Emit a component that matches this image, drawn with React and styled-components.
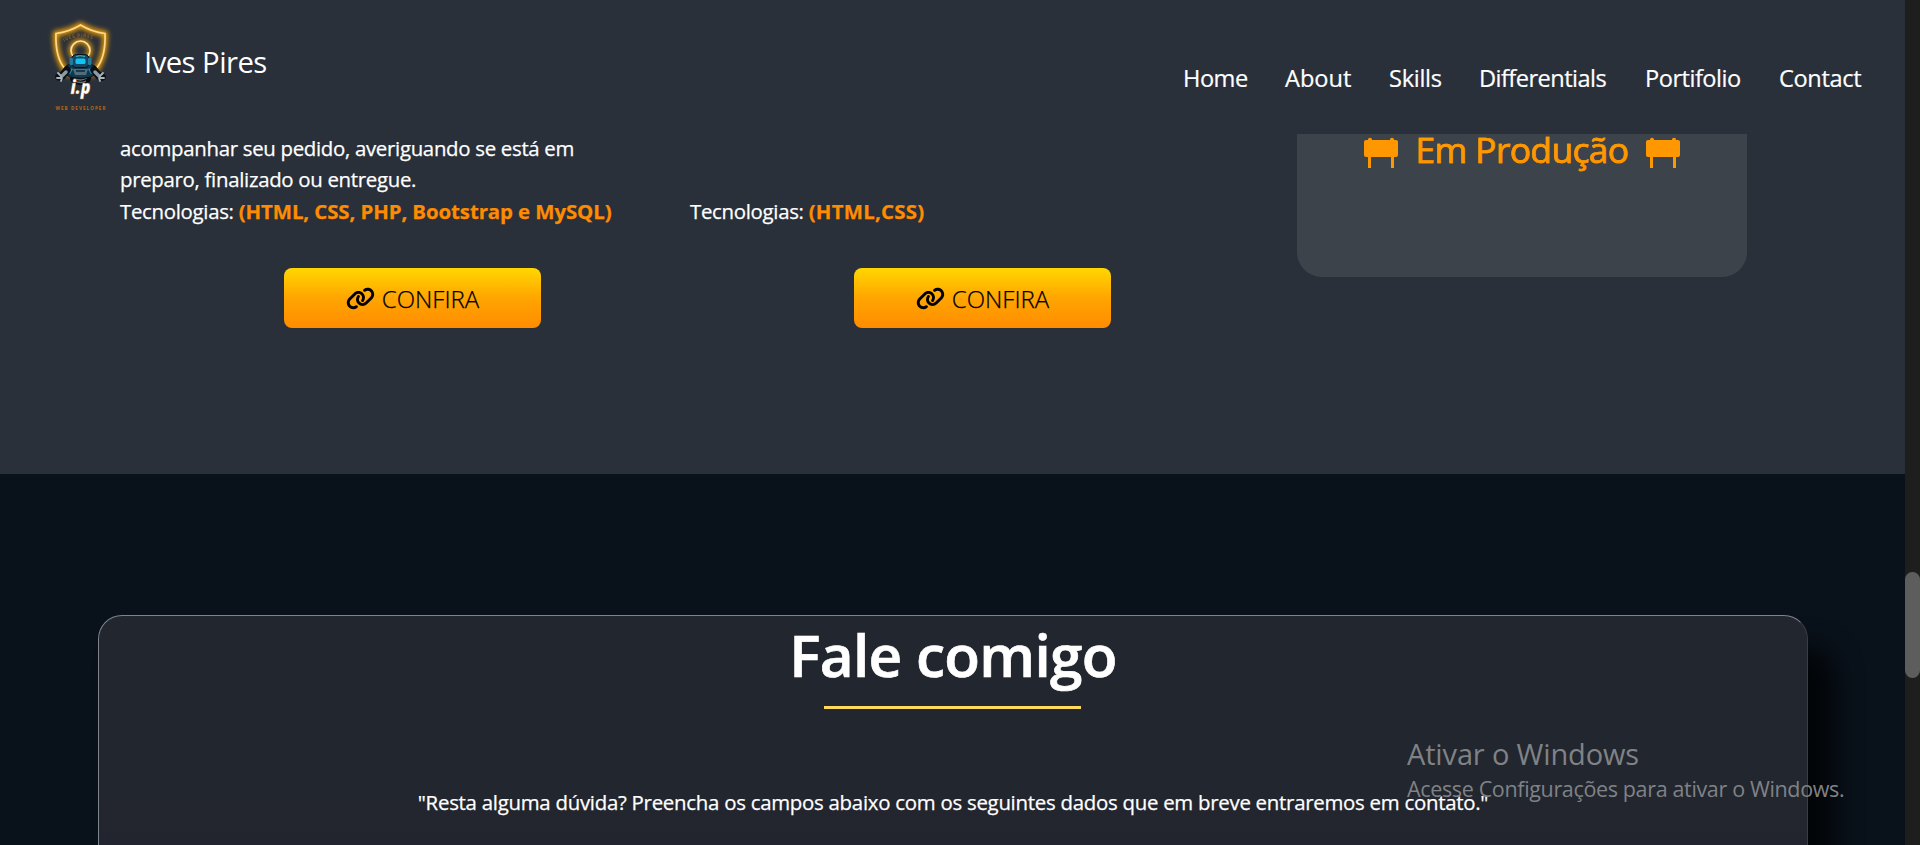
import React from "react";
import styled, { createGlobalStyle } from "styled-components";
import { FaLink } from "react-icons/fa6";

const Global = createGlobalStyle`
  *, *::before, *::after { box-sizing: border-box; }
  body { margin: 0; overflow: hidden; background: #09111a; font-family: "Open Sans", "Noto Sans", sans-serif; color: #fff; }
  p, h1, h2, h3 { margin: 0; font-weight: 400; }
`;
const Screen = styled.div`
  position: relative; display: flex; height: 845px; overflow: hidden;
`;
const Page = styled.main`flex: 1; min-width: 0; display: flex; flex-direction: column;`;
const Header = styled.header`
  height: 134px; flex: none; background: #29303a;
  display: flex; justify-content: space-between; padding: 0 43px 0 40px;
`;
const Brand = styled.div`display: flex; align-items: flex-start;`;
const Name = styled.h1`
  margin: 41px 0 0 24px; font-size: 29.3px; line-height: 42px; letter-spacing: -0.55px; white-space: nowrap;
`;
const Nav = styled.nav`display: flex; gap: 38px; margin-top: 60px; height: 36px;`;
const NavLink = styled.a`
  width: ${(p) => p.$w}px; font-size: 23.6px; line-height: 36px; white-space: nowrap; letter-spacing: ${(p) => p.$ls}px;
  -webkit-text-stroke: 0.2px currentColor;
`;
const Portfolio = styled.section`
  height: 340px; flex: none; background: #29303a; display: flex; align-items: flex-start; padding-left: 120px;
`;
const Project = styled.article`
  width: 570px; height: 194px; display: flex; flex-direction: column; justify-content: flex-end;
`;
const Text = styled.p`
  font-size: 20.4px; line-height: 31.3px; white-space: nowrap; letter-spacing: ${(p) => p.$ls ?? -0.3}px;
  -webkit-text-stroke: 0.25px currentColor;
`;
const Tech = styled.strong`font-weight: 700; color: #ff8c00; letter-spacing: ${(p) => p.$ls}px;`;
const Button = styled.button`
  width: 257px; height: 60px; margin: 41px 0 0 164px; flex: none; border: 0; border-radius: 8px; padding: 1px 0 0;
  background: linear-gradient(#ffd700, #ffa500 50%, #ff8c00); color: #000;
  display: flex; align-items: center; justify-content: center; gap: 7px;
  font: 300 24px/59px "Open Sans", sans-serif; letter-spacing: 0;
  -webkit-text-stroke: 0.25px currentColor;
`;
const Soon = styled.article`
  width: 450px; height: 143px; margin-left: 37px; border-radius: 0 0 25px 25px; background: #3c434a;
  display: flex; justify-content: center; gap: 18px; color: #ff9800;
`;
const SoonTitle = styled.h3`
  font-size: 35.5px; line-height: 50px; margin-top: -10px; height: 52px; letter-spacing: -0.7px; white-space: nowrap;
  background: linear-gradient(#ffa500, #ff8c00); background-clip: text; color: transparent;
  -webkit-text-stroke: 0.6px #ff9900;
`;
const Contact = styled.section`
  flex: 1; min-height: 0; padding: 141px 97px 0 98px; overflow: hidden;
  background: #09111a;
`;
const FormCard = styled.div`
  height: 700px; border-radius: 24px; border: 1px solid; border-color: #80828c #3a3d45 #3a3d45 #80828c;
  background: linear-gradient(#22262e 180px, #22252f 230px);
  box-shadow: 25px 34px 28px rgba(0, 0, 0, 0.75);
  display: flex; flex-direction: column; align-items: center;
`;
const Heading = styled.h2`
  font-size: 58.5px; font-weight: 600; line-height: 80px; height: 80px; margin-top: -2px;
  letter-spacing: -0.7px; white-space: nowrap; -webkit-text-stroke: 0.7px currentColor;
`;
const Rule = styled.div`width: 257px; height: 3px; background: #ffd95a; margin: 12px 1px 78px 0;`;
const Track = styled.aside`width: 15px; background: #1e1e1e; padding-top: 572px;`;
const Thumb = styled.div`height: 106px; border-radius: 7.5px; background: #5d5d5d;`;
const Watermark = styled.div`
  position: absolute; left: 1407px; top: 733px; color: #808286; white-space: nowrap;
`;
const MarkTitle = styled.div`font-size: 29px; line-height: 42px; letter-spacing: -0.15px;`;
const MarkText = styled.div`font-size: 21.5px; line-height: 28px; letter-spacing: -0.35px;`;

const Logo = () => (
  <svg width="80" height="134" viewBox="40 0 80 134" fontFamily="Open Sans, sans-serif">
    <defs>
      <filter id="glow" x="-50%" y="-50%" width="200%" height="200%"><feGaussianBlur stdDeviation="2.8" /></filter>
      <path id="arch" d="M64 42 Q80.500 32 98 42" />
    </defs>
    <g fill="none" stroke="#ffa800">
      <path d="M70 76 Q55 60 55.800 33.500 Q69 32 80.500 25 Q92 32 105 33.500 Q106 60 91 76" strokeWidth="5" filter="url(#glow)" />
      <path d="M65 69 Q55 57 56 33.500 Q69 32 80.500 25 Q92 32 105 33.500 Q106 57 96 69" stroke="#ffd98c" strokeWidth="1.700" />
      <circle cx="80.500" cy="50.500" r="9.500" strokeWidth="4" filter="url(#glow)" />
      <circle cx="80.500" cy="50.500" r="9.500" stroke="#ffe0a0" strokeWidth="1.700" />
    </g>
    <text fontSize="5" fontWeight="600" fill="#9a621c" letterSpacing="0.5"><textPath href="#arch">IVES PIRES</textPath></text>
    <ellipse cx="80.500" cy="78.500" rx="10.500" ry="6.500" fill="#0b0e12" />
    <path d="M74 78q6 4 13 0M75 81q6 3 11 0" fill="none" stroke="#6c7278" strokeWidth="1.300" />
    <path d="M66 66q6-4 14.500-3q8-1 14.500 3l4 6-8 5q-10 3-21 0l-8-5z" fill="#12384d" stroke="#090d12" strokeWidth="1" />
    <path d="M67 67l6 2-3 5-5-2zM94 67l-6 2 3 5 5-2z" fill="#238dc8" />
    <path d="M73 69h15l-2 6H75z" fill="#526c7a" />
    <path d="M76 71h9" stroke="#0c2736" strokeWidth="1.500" />
    <rect x="71.500" y="54.500" width="18" height="13" rx="5" fill="#164660" stroke="#081017" />
    <rect x="69.500" y="58" width="3.500" height="7" rx="1" fill="#267a9e" />
    <rect x="88" y="58" width="3.500" height="7" rx="1" fill="#267a9e" />
    <rect x="75.500" y="58.500" width="10" height="5.500" rx="1.500" fill="#10c5f4" />
    <path d="M76 56.500q4-1.500 9 0" fill="none" stroke="#43b8dc" strokeWidth="1.200" />
    <g fill="none" strokeLinecap="round" strokeLinejoin="round">
      <path d="M67 70l-5 6-3 1M94 70l5 6 3 1" stroke="#0b1015" strokeWidth="7.500" />
      <path d="M66 72l-4 4M95 72l4 4" stroke="#8c9ba3" strokeWidth="3.500" />
      <path d="M61 76l-3-3M61 78h-4M62 78l-1 3M100 76l3-3M100 78h4M99 78l1 3" stroke="#aab5ba" strokeWidth="1.800" />
    </g>
    <text x="70.500" y="94" fontSize="20" fontWeight="800" fontStyle="italic" fill="#fff" stroke="#d77718" strokeWidth="0.300" textLength="20" lengthAdjust="spacingAndGlyphs">i.p</text>
    <text x="55.500" y="109.500" fontSize="4.600" fontWeight="700" fill="#b36a16" textLength="50">WEB DEVELOPER</text>
  </svg>
);
const Board = () => (
  <svg width="34" height="43" viewBox="0 0 34 43" fill="currentColor">
    <path d="M2 6h2V5.500a2 1.700 0 0 1 4 0V6h18V5.500a2 1.700 0 0 1 4 0V6h2q2 0 2 2v13q0 2-2 2h-2v11h-3V23H7v11H4V23H2q-2 0-2-2V8q0-2 2-2z" />
  </svg>
);

const links = [
  ["Home", 64, -0.5], ["About", 66, 0], ["Skills", 52, -0.3],
  ["Differentials", 128, -0.55], ["Portifolio", 96, -0.5], ["Contact", 83, -0.35],
];

export default function App() {
  return (
    <>
      <Global />
      <Screen>
        <Page>
          <Header>
            <Brand><Logo /><Name>Ives Pires</Name></Brand>
            <Nav>{links.map(([t, w, ls]) => <NavLink key={t} $w={w} $ls={ls}>{t}</NavLink>)}</Nav>
          </Header>
          <Portfolio>
            <Project>
              <Text>acompanhar seu pedido, averiguando se está em</Text>
              <Text>preparo, finalizado ou entregue.</Text>
              <Text>Tecnologias: <Tech $ls={-0.08}>(HTML, CSS, PHP, Bootstrap e MySQL)</Tech></Text>
              <Button><FaLink size={29} />CONFIRA</Button>
            </Project>
            <Project>
              <Text>Tecnologias: <Tech $ls={0.25}>(HTML,CSS)</Tech></Text>
              <Button><FaLink size={29} />CONFIRA</Button>
            </Project>
            <Soon><Board /><SoonTitle>Em Produção</SoonTitle><Board /></Soon>
          </Portfolio>
          <Contact>
            <FormCard>
              <Heading>Fale comigo</Heading>
              <Rule />
              <Text $ls={-0.26}>"Resta alguma dúvida? Preencha os campos abaixo com os seguintes dados que em breve entraremos em contato."</Text>
            </FormCard>
          </Contact>
        </Page>
        <Track><Thumb /></Track>
        <Watermark>
          <MarkTitle>Ativar o Windows</MarkTitle>
          <MarkText>Acesse Configurações para ativar o Windows.</MarkText>
        </Watermark>
      </Screen>
    </>
  );
}
